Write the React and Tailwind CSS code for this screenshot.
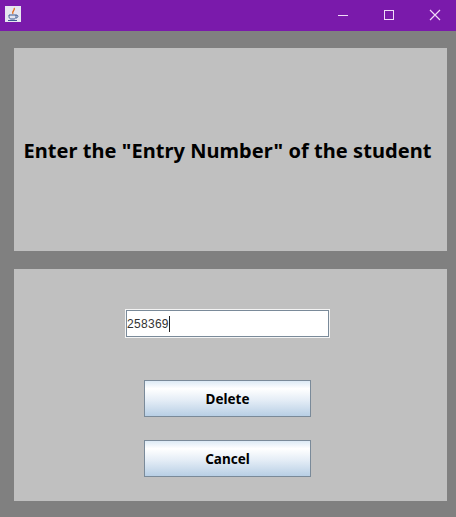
const App = () => {
  return (
    <div className="w-[456px] h-[517px] bg-[#808080] flex flex-col overflow-hidden font-['Noto_Sans',sans-serif]">
      <div className="h-[31px] bg-[#7a1aab] flex items-center">
        <svg className="ml-[5px] mt-[-3px]" width="16" height="16" viewBox="0 0 16 16">
          <rect x="0" y="0" width="16" height="16" fill="#e6e6f0" />
          <path d="M9 2c2 2-3 3-1 6" stroke="#e07020" strokeWidth="1.4" fill="none" />
          <path d="M4 9h7v1.5c0 1.5-1 2.5-2 2.5H6c-1 0-2-1-2-2.500z M11 9c3 0 2 3 0 3" stroke="#3a5a90" strokeWidth="1" fill="none" />
          <path d="M3 14.500h9" stroke="#3a5a90" strokeWidth="1" />
        </svg>
        <div className="ml-auto flex items-center">
          <svg width="12" height="12" viewBox="0 0 12 12" className="mr-[34px] mt-[-2px]">
            <path d="M1 6.5h10" stroke="#f0dcf8" strokeWidth="1" />
          </svg>
          <svg width="12" height="12" viewBox="0 0 12 12" className="mr-[34px] mt-[-2px]">
            <rect x="1.5" y="1.5" width="9" height="9" fill="none" stroke="#f0dcf8" strokeWidth="1" />
          </svg>
          <svg width="12" height="12" viewBox="0 0 12 12" className="mr-[15px] mt-[-2px]">
            <path d="M1 1l10 10M11 1L1 11" stroke="#f0dcf8" strokeWidth="1.2" />
          </svg>
        </div>
      </div>
      <div className="ml-[14px] mt-[17px] w-[433px] h-[203px] bg-[#c0c0c0] flex items-center justify-center pr-[6px] pt-[3px]">
        <p className="text-[20px] font-bold text-black whitespace-nowrap tracking-[0.05px]">
          Enter the "Entry Number" of the student
        </p>
      </div>
      <div className="ml-[14px] mt-[18px] w-[433px] h-[232px] bg-[#c0c0c0] flex flex-col items-center pr-[6px]">
        <div className="mt-[40px] w-[205px] h-[29px] bg-white border border-[#f4f4f4] shadow-[inset_0_0_0_1px_#7a8a99] flex items-center px-[1px] text-[12px] tracking-[0.3px] text-[#333] font-['Liberation_Sans',sans-serif]">
          258369
          <span className="w-px h-[16px] bg-[#222]" />
        </div>
        <button className="mt-[42px] w-[167px] h-[37px] pt-[2px] border border-[#7a8a99] bg-[linear-gradient(#ddeaf5,#ffffff_22%,#e4edf6_55%,#b8cfe5)] text-[13.5px] font-bold text-black">
          Delete
        </button>
        <button className="mt-[23px] w-[167px] h-[37px] pt-[2px] border border-[#7a8a99] bg-[linear-gradient(#ddeaf5,#ffffff_22%,#e4edf6_55%,#b8cfe5)] text-[13.5px] font-bold text-black">
          Cancel
        </button>
      </div>
    </div>
  );
};

export default App;
